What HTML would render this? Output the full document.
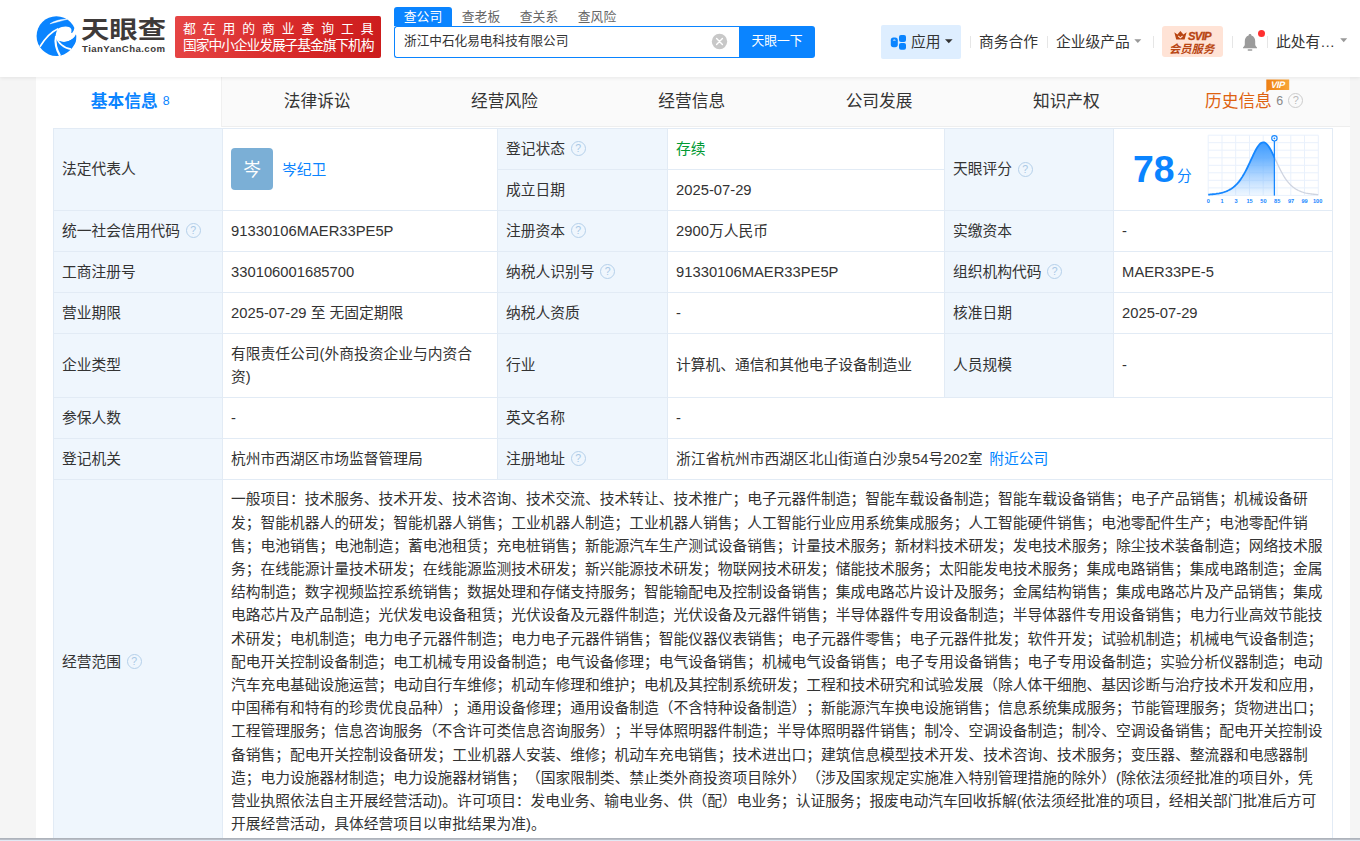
<!DOCTYPE html>
<html lang="zh-CN">
<head>
<meta charset="utf-8">
<title>浙江中石化易电科技有限公司 - 天眼查</title>
<style>
*{box-sizing:border-box;margin:0;padding:0}
html,body{width:1360px;height:841px;overflow:hidden}
body{background:#f5f5f5;font-family:"Liberation Sans","Noto Sans CJK SC",sans-serif;color:#333;font-size:15px;position:relative}
a{text-decoration:none;color:#0084ff}
.abs{position:absolute}
/* header */
#hd{position:absolute;left:0;top:0;width:1360px;height:77px;background:#fff;box-shadow:0 1px 4px rgba(0,0,0,.08);z-index:5}
#hd .t{position:absolute;white-space:nowrap;line-height:1}

#lg1{left:81px;top:16px;font-size:24px;font-weight:bold;color:#3e3a39;letter-spacing:0;font-family:"Noto Sans CJK SC",sans-serif;transform:scaleX(1.18);transform-origin:0 0}
#lg2{left:82px;top:44px;font-size:9.6px;font-weight:bold;color:#3e3a39;letter-spacing:0.45px}
#ban{position:absolute;left:175px;top:16px;width:206px;height:42px;border-radius:2px;background:linear-gradient(100deg,#e64545 0%,#d82a2a 55%,#cc1c1c 100%);color:#fff;white-space:nowrap}
#ban .b1{position:absolute;left:8px;top:6px;font-size:12.8px;line-height:14px;letter-spacing:6.94px}
#ban .b2{position:absolute;left:8px;top:23px;font-size:13.8px;line-height:14px;letter-spacing:-1.1px}
.stab{top:7px;width:58px;height:19px;line-height:19px!important;text-align:center;font-size:12.8px;color:#666}
.stab.on{background:#0a84ff;color:#fff;border-radius:3px 3px 0 0}
#sbox{position:absolute;left:394px;top:26px;width:347px;height:32px;border:1px solid #0a84ff;border-right:0;border-radius:3px 0 0 3px;background:#fff;font-size:12.65px;line-height:28.5px;padding-left:9px;color:#333;white-space:nowrap}
#sbtn{position:absolute;left:739px;top:26px;width:76px;height:32px;background:#0a84ff;color:#fff;font-size:12.8px;line-height:30px;text-align:center;border-radius:0 3px 3px 0;white-space:nowrap}
#app{position:absolute;left:881px;top:25px;width:80px;height:34px;background:#deeeff;border-radius:2px}
.sep{position:absolute;top:36px;width:1px;height:12px;background:#e6e6e6}
.nav{top:34px;font-size:14.75px;color:#333;line-height:17px!important}
#svip{position:absolute;left:1162px;top:26px;width:61px;height:31px;background:#ffe3d6;border-radius:3px;color:#b84512}
/* card */
#card{position:absolute;left:36px;top:77px;width:1314px;height:770px;background:#fff}
#tabs{position:absolute;left:0;top:0;width:1314px;height:50px;background:#fafafa;border-bottom:1px solid #eee}
#tabs .tab{position:absolute;top:0;height:50px;width:187.3px;text-align:center;font-size:16.72px;line-height:50px;color:#333;white-space:nowrap}
#tabs .tab.on{background:#fff;color:#0a84ff;font-weight:bold;height:50px;width:186px;border-right:1px solid #f0f0f0;padding-left:3.4px}
#tabs .tab .n{font-size:12.4px;font-weight:normal;position:relative;top:-2px;margin-left:5px;font-family:"Liberation Sans",sans-serif}
/* table */
#tb{position:absolute;left:53px;top:128px;width:1279px;border-collapse:collapse;table-layout:fixed;font-size:14.75px;color:#333}
#tb td{border:1px solid #e2ebf5;padding:0 8.1px;vertical-align:middle;line-height:23px;background:#fff;height:41px}
#tb td.l{background:#eff6fd}
.q{display:inline-block;width:15px;height:15px;border:1px solid #b5d0ea;border-radius:50%;font-size:10.5px;line-height:13.5px;text-align:center;color:#a9c8e6;vertical-align:middle;margin-left:5.5px;position:relative;top:-1px;font-family:"Liberation Sans",sans-serif}
.av{display:inline-block;width:42px;height:42px;border-radius:4px;background:#7bafd6;color:#fff;font-size:17.7px;line-height:45px;text-align:center;vertical-align:middle;margin-right:9px;position:relative;top:-1px}
.nm{vertical-align:middle;color:#0a84ff}
.sc{position:absolute;left:19px;top:20.5px;font:bold 37.4px/38px "Liberation Sans",sans-serif;color:#0a84ff;letter-spacing:0}
.fen{position:absolute;left:63px;top:36.5px;font-size:14.75px;line-height:20px;color:#0a84ff}
.q2{display:inline-block;width:15px;height:15px;border:1px solid #ccc;border-radius:50%;font-size:11px;line-height:13.5px;text-align:center;color:#bbb;vertical-align:middle;margin-left:5px;position:relative;top:-2px;font-weight:normal;font-family:"Liberation Sans",sans-serif}
#scope div{white-space:nowrap;text-spacing-trim:space-all;height:23.2px;line-height:23.2px}
#btm{position:absolute;left:0;top:838px;width:1360px;height:3px;background:linear-gradient(#aeb3bb 0,#aeb3bb 33.3%,#b9bec7 33.3%,#b9bec7 66.6%,#e1e9f4 66.6%);z-index:9}
</style>
</head>
<body>
<div id="hd">
 <svg class="abs" style="left:32px;top:12px" width="50" height="48" viewBox="0 0 876 841">
  <circle cx="427" cy="422" r="347" fill="#0a84ff"/>
  <path d="M455,292 C530,250 650,235 688,300 C695,330 690,350 688,366 L702,366 C725,340 738,315 738,285 L800,285 L800,395 L770,395 C740,480 600,560 480,508 C445,480 425,455 416,428 C414,385 425,335 455,292 Z" fill="#fff"/>
  <path d="M480,508 C600,560 740,480 770,395 C785,470 770,560 720,590 C650,625 540,590 480,508 Z" fill="#0a84ff"/>
  <path d="M428,430 C450,540 560,640 685,650" fill="none" stroke="#fff" stroke-width="28"/>
  <path d="M422,420 C395,540 440,680 492,768" fill="none" stroke="#fff" stroke-width="38"/>
  <path d="M458,293 C350,340 230,460 138,608" fill="none" stroke="#fff" stroke-width="30"/>
  <path d="M314,208 C390,150 520,125 622,126 C520,150 420,185 314,208 Z" fill="#fff" stroke="#fff" stroke-width="8"/>
 </svg>
 <div class="t" id="lg1">天眼查</div>
 <div class="t" id="lg2">TianYanCha.com</div>
 <div id="ban"><div class="b1">都在用的商业查询工具</div><div class="b2">国家中小企业发展子基金旗下机构</div></div>
 <div class="t stab on" style="left:394px">查公司</div>
 <div class="t stab" style="left:452px">查老板</div>
 <div class="t stab" style="left:510px">查关系</div>
 <div class="t stab" style="left:568px">查风险</div>
 <div id="sbox"><span>浙江中石化易电科技有限公司</span></div>
 <svg class="abs" style="left:711px;top:33px" width="17" height="17" viewBox="0 0 17 17"><circle cx="8.5" cy="8.5" r="7.7" fill="#c8c8c8"/><path d="M5.6,5.6 L11.4,11.4 M11.4,5.6 L5.6,11.4" stroke="#fff" stroke-width="1.4" stroke-linecap="round"/></svg>
 <div id="sbtn">天眼一下</div>
 <div id="app">
  <svg class="abs" style="left:9px;top:9px" width="17" height="17" viewBox="0 0 17 17"><rect x="0.8" y="3.6" width="7" height="9.6" rx="2.6" fill="#0a84ff"/><path d="M2.7,6.6 Q4.3,4.2 5.9,6.6 Z" fill="#fff"/><rect x="9" y="1.1" width="7" height="6.8" rx="2" fill="#0a84ff"/><rect x="9" y="9" width="7" height="6.8" rx="2" fill="#0a84ff"/></svg>
  <span class="t" style="left:30px;top:9.6px;font-size:14.75px">应用</span>
  <svg class="abs" style="left:64px;top:14px" width="8" height="5" viewBox="0 0 8 5"><path d="M0,0.3 L7.6,0.3 L3.8,4.2 Z" fill="#333"/></svg>
 </div>
 <i class="sep" style="left:970px"></i>
 <div class="t nav" style="left:979px">商务合作</div>
 <i class="sep" style="left:1047px"></i>
 <div class="t nav" style="left:1056px">企业级产品</div>
 <svg class="abs" style="left:1134px;top:39px" width="8" height="5" viewBox="0 0 8 5"><path d="M0.3,0.3 L7.3,0.3 L3.8,4 Z" fill="#999"/></svg>
 <i class="sep" style="left:1153px"></i>
 <div id="svip">
  <svg class="abs" style="left:12px;top:5px" width="13" height="9" viewBox="0 0 13 9"><path d="M0.3,1.2 L3.4,3.4 L6.4,0 L9.4,3.4 L12.6,1.2 L10.6,8.6 L2.2,8.6 Z" fill="#b84512"/><path d="M4.3,5 L6.4,6.8 L8.5,5" fill="none" stroke="#ffe3d6" stroke-width="1.1"/></svg>
  <div class="t" style="left:26px;top:4px;font:italic bold 11.3px 'Liberation Sans',sans-serif;letter-spacing:-0.7px;-webkit-text-stroke:0.3px #b84512">SVIP</div>
  <div class="t" style="left:7px;top:18.4px;font-size:11.3px;font-weight:bold;font-style:italic;letter-spacing:0">会员服务</div>
 </div>
 <i class="sep" style="left:1232px"></i>
 <svg class="abs" style="left:1241px;top:33px" width="18" height="19" viewBox="0 0 18 19"><path d="M9,1 C9.9,1 10.4,1.6 10.4,2.4 C13,3.2 14.2,5.4 14.2,8.2 L14.2,11.6 C14.2,12.8 15,13.6 16,14.4 L16,15.2 L2,15.2 L2,14.4 C3,13.6 3.8,12.8 3.8,11.6 L3.8,8.2 C3.8,5.4 5,3.2 7.6,2.4 C7.6,1.6 8.1,1 9,1 Z" fill="#9b9b9b"/><rect x="6.6" y="16.3" width="4.8" height="1.5" rx="0.7" fill="#9b9b9b"/></svg>
 <i class="abs" style="left:1258px;top:29.5px;width:7px;height:7px;border-radius:50%;background:#ff3030"></i>
 <i class="sep" style="left:1267px"></i>
 <div class="t nav" style="left:1276px">此处有…</div>
 <svg class="abs" style="left:1340px;top:38px" width="8" height="5" viewBox="0 0 8 5"><path d="M0.2,0.3 L7.2,0.3 L3.7,4.3 Z" fill="#999"/></svg>
</div>
<div id="card">
 <div id="tabs">
  <div class="tab on" style="left:0">基本信息<span class="n">8</span></div>
  <div class="tab" style="left:187.5px">法律诉讼</div>
  <div class="tab" style="left:374.8px">经营风险</div>
  <div class="tab" style="left:562.1px">经营信息</div>
  <div class="tab" style="left:749.4px">公司发展</div>
  <div class="tab" style="left:936.7px">知识产权</div>
  <div class="tab" style="left:1126px;color:#de6210;text-align:left;padding-left:43px">历史信息<span class="n" style="color:#888;margin-left:4.5px">6</span><span class="q2">?</span>
   <svg class="abs" style="left:103.5px;top:1.5px" width="24" height="14" viewBox="0 0 24 14"><defs><linearGradient id="vg" x1="0" y1="0" x2="1" y2="0"><stop offset="0" stop-color="#ee7f14"/><stop offset="1" stop-color="#f8a638"/></linearGradient></defs><path d="M0.3,0.5 H23.2 V11 H3.2 L0.3,13.6 Z" fill="url(#vg)"/><text x="6.6" y="9" font-family="Liberation Sans,sans-serif" font-size="9.3" font-weight="bold" fill="#fff" letter-spacing="-0.5" transform="skewX(-14)">VIP</text></svg></div>
 </div>
</div>
<table id="tb">
<colgroup><col style="width:169px"><col style="width:275px"><col style="width:170px"><col style="width:277px"><col style="width:169px"><col style="width:219px"></colgroup>
<tr><td class="l" rowspan="2">法定代表人</td><td rowspan="2"><span class="av">岑</span><a class="nm">岑纪卫</a></td><td class="l">登记状态<span class="q">?</span></td><td style="color:#093">存续</td><td class="l" rowspan="2">天眼评分<span class="q">?</span></td><td rowspan="2" style="position:relative;padding:0"><span class="sc">78</span><span class="fen">分</span>
<svg class="abs" style="left:87px;top:0" width="130" height="81" viewBox="1201 129 130 81">
<defs><linearGradient id="g1" x1="0" y1="0" x2="0" y2="1"><stop offset="0" stop-color="#3d9bff"/><stop offset="0.3" stop-color="#5aaaff" stop-opacity=".9"/><stop offset="1" stop-color="#7dbcff" stop-opacity=".12"/></linearGradient><clipPath id="cl"><rect x="1200" y="130" width="74.4" height="70"/></clipPath><clipPath id="cr"><rect x="1274.4" y="130" width="60" height="70"/></clipPath></defs>
<g stroke="#e9f1fc" stroke-width="1" fill="none"><path d="M1208.2,135.2 V195.4"/><path d="M1208.2,135.2 H1318.3"/><path d="M1222.0,135.2 V195.4"/><path d="M1208.2,142.7 H1318.3"/><path d="M1235.7,135.2 V195.4"/><path d="M1208.2,150.2 H1318.3"/><path d="M1249.5,135.2 V195.4"/><path d="M1208.2,157.8 H1318.3"/><path d="M1263.2,135.2 V195.4"/><path d="M1208.2,165.3 H1318.3"/><path d="M1277.0,135.2 V195.4"/><path d="M1208.2,172.8 H1318.3"/><path d="M1290.8,135.2 V195.4"/><path d="M1208.2,180.3 H1318.3"/><path d="M1304.5,135.2 V195.4"/><path d="M1208.2,187.9 H1318.3"/><path d="M1318.3,135.2 V195.4"/><path d="M1208.2,195.4 H1318.3"/></g>
<path d="M1208.2,194.62 L1209.3,194.55 L1210.4,194.47 L1211.5,194.38 L1212.6,194.27 L1213.7,194.16 L1214.8,194.03 L1215.9,193.89 L1217.0,193.72 L1218.1,193.54 L1219.2,193.34 L1220.3,193.11 L1221.4,192.86 L1222.5,192.57 L1223.6,192.25 L1224.7,191.90 L1225.8,191.50 L1226.9,191.06 L1228.0,190.56 L1229.1,190.01 L1230.2,189.40 L1231.3,188.72 L1232.4,187.97 L1233.5,187.14 L1234.6,186.23 L1235.7,185.22 L1236.8,184.11 L1237.9,182.89 L1239.0,181.57 L1240.1,180.13 L1241.2,178.57 L1242.3,176.89 L1243.4,175.09 L1244.5,173.16 L1245.6,171.13 L1246.7,168.99 L1247.8,166.75 L1248.9,164.44 L1250.0,162.08 L1251.1,159.69 L1252.2,157.30 L1253.3,154.95 L1254.4,152.68 L1255.5,150.53 L1256.6,148.55 L1257.7,146.77 L1258.8,145.25 L1259.9,144.01 L1261.0,143.09 L1262.1,142.52 L1263.2,142.30 L1264.3,142.45 L1265.4,142.96 L1266.5,143.82 L1267.6,145.00 L1268.7,146.48 L1269.8,148.21 L1270.9,150.16 L1272.0,152.28 L1273.1,154.53 L1274.2,156.87 L1275.3,159.25 L1276.4,161.64 L1277.5,164.02 L1278.6,166.34 L1279.7,168.59 L1280.8,170.75 L1281.9,172.80 L1283.0,174.75 L1284.1,176.57 L1285.2,178.27 L1286.3,179.85 L1287.4,181.32 L1288.5,182.66 L1289.6,183.89 L1290.7,185.02 L1291.8,186.05 L1292.9,186.98 L1294.0,187.83 L1295.1,188.59 L1296.2,189.28 L1297.3,189.91 L1298.4,190.47 L1299.5,190.97 L1300.6,191.42 L1301.7,191.83 L1302.8,192.19 L1303.9,192.52 L1305.0,192.81 L1306.1,193.07 L1307.2,193.30 L1308.3,193.51 L1309.4,193.69 L1310.5,193.86 L1311.6,194.01 L1312.7,194.14 L1313.8,194.25 L1314.9,194.36 L1316.0,194.45 L1317.1,194.53 L1318.2,194.61 L1318.3,195.6 L1208.2,195.6 Z" fill="url(#g1)" clip-path="url(#cl)"/>
<path d="M1208.2,194.62 L1209.3,194.55 L1210.4,194.47 L1211.5,194.38 L1212.6,194.27 L1213.7,194.16 L1214.8,194.03 L1215.9,193.89 L1217.0,193.72 L1218.1,193.54 L1219.2,193.34 L1220.3,193.11 L1221.4,192.86 L1222.5,192.57 L1223.6,192.25 L1224.7,191.90 L1225.8,191.50 L1226.9,191.06 L1228.0,190.56 L1229.1,190.01 L1230.2,189.40 L1231.3,188.72 L1232.4,187.97 L1233.5,187.14 L1234.6,186.23 L1235.7,185.22 L1236.8,184.11 L1237.9,182.89 L1239.0,181.57 L1240.1,180.13 L1241.2,178.57 L1242.3,176.89 L1243.4,175.09 L1244.5,173.16 L1245.6,171.13 L1246.7,168.99 L1247.8,166.75 L1248.9,164.44 L1250.0,162.08 L1251.1,159.69 L1252.2,157.30 L1253.3,154.95 L1254.4,152.68 L1255.5,150.53 L1256.6,148.55 L1257.7,146.77 L1258.8,145.25 L1259.9,144.01 L1261.0,143.09 L1262.1,142.52 L1263.2,142.30 L1264.3,142.45 L1265.4,142.96 L1266.5,143.82 L1267.6,145.00 L1268.7,146.48 L1269.8,148.21 L1270.9,150.16 L1272.0,152.28 L1273.1,154.53 L1274.2,156.87 L1275.3,159.25 L1276.4,161.64 L1277.5,164.02 L1278.6,166.34 L1279.7,168.59 L1280.8,170.75 L1281.9,172.80 L1283.0,174.75 L1284.1,176.57 L1285.2,178.27 L1286.3,179.85 L1287.4,181.32 L1288.5,182.66 L1289.6,183.89 L1290.7,185.02 L1291.8,186.05 L1292.9,186.98 L1294.0,187.83 L1295.1,188.59 L1296.2,189.28 L1297.3,189.91 L1298.4,190.47 L1299.5,190.97 L1300.6,191.42 L1301.7,191.83 L1302.8,192.19 L1303.9,192.52 L1305.0,192.81 L1306.1,193.07 L1307.2,193.30 L1308.3,193.51 L1309.4,193.69 L1310.5,193.86 L1311.6,194.01 L1312.7,194.14 L1313.8,194.25 L1314.9,194.36 L1316.0,194.45 L1317.1,194.53 L1318.2,194.61" fill="none" stroke="#cfd4e0" stroke-width="1.3" clip-path="url(#cr)"/>
<path d="M1208.2,194.62 L1209.3,194.55 L1210.4,194.47 L1211.5,194.38 L1212.6,194.27 L1213.7,194.16 L1214.8,194.03 L1215.9,193.89 L1217.0,193.72 L1218.1,193.54 L1219.2,193.34 L1220.3,193.11 L1221.4,192.86 L1222.5,192.57 L1223.6,192.25 L1224.7,191.90 L1225.8,191.50 L1226.9,191.06 L1228.0,190.56 L1229.1,190.01 L1230.2,189.40 L1231.3,188.72 L1232.4,187.97 L1233.5,187.14 L1234.6,186.23 L1235.7,185.22 L1236.8,184.11 L1237.9,182.89 L1239.0,181.57 L1240.1,180.13 L1241.2,178.57 L1242.3,176.89 L1243.4,175.09 L1244.5,173.16 L1245.6,171.13 L1246.7,168.99 L1247.8,166.75 L1248.9,164.44 L1250.0,162.08 L1251.1,159.69 L1252.2,157.30 L1253.3,154.95 L1254.4,152.68 L1255.5,150.53 L1256.6,148.55 L1257.7,146.77 L1258.8,145.25 L1259.9,144.01 L1261.0,143.09 L1262.1,142.52 L1263.2,142.30 L1264.3,142.45 L1265.4,142.96 L1266.5,143.82 L1267.6,145.00 L1268.7,146.48 L1269.8,148.21 L1270.9,150.16 L1272.0,152.28 L1273.1,154.53 L1274.2,156.87 L1275.3,159.25 L1276.4,161.64 L1277.5,164.02 L1278.6,166.34 L1279.7,168.59 L1280.8,170.75 L1281.9,172.80 L1283.0,174.75 L1284.1,176.57 L1285.2,178.27 L1286.3,179.85 L1287.4,181.32 L1288.5,182.66 L1289.6,183.89 L1290.7,185.02 L1291.8,186.05 L1292.9,186.98 L1294.0,187.83 L1295.1,188.59 L1296.2,189.28 L1297.3,189.91 L1298.4,190.47 L1299.5,190.97 L1300.6,191.42 L1301.7,191.83 L1302.8,192.19 L1303.9,192.52 L1305.0,192.81 L1306.1,193.07 L1307.2,193.30 L1308.3,193.51 L1309.4,193.69 L1310.5,193.86 L1311.6,194.01 L1312.7,194.14 L1313.8,194.25 L1314.9,194.36 L1316.0,194.45 L1317.1,194.53 L1318.2,194.61" fill="none" stroke="#1687ff" stroke-width="1.8" clip-path="url(#cl)"/>
<line x1="1274.4" y1="141" x2="1274.4" y2="195.6" stroke="#1687ff" stroke-width="1.3"/>
<circle cx="1274.4" cy="138.3" r="2.7" fill="#fff" stroke="#1687ff" stroke-width="1.1"/><circle cx="1274.4" cy="138.3" r="0.9" fill="#1687ff"/>
<g font-family="Liberation Sans,sans-serif" font-size="5.6" font-weight="bold" fill="#1687ff" text-anchor="middle"><text x="1208.4" y="202.7">0</text><text x="1222.0" y="202.7">1</text><text x="1236.0" y="202.7">3</text><text x="1249.6" y="202.7">15</text><text x="1263.4" y="202.7">50</text><text x="1277.2" y="202.7">85</text><text x="1291.0" y="202.7">97</text><text x="1304.6" y="202.7">99</text><text x="1317.6" y="202.7">100</text></g>
</svg></td></tr>
<tr><td class="l">成立日期</td><td>2025-07-29</td></tr>
<tr><td class="l">统一社会信用代码<span class="q">?</span></td><td>91330106MAER33PE5P</td><td class="l">注册资本<span class="q">?</span></td><td>2900万人民币</td><td class="l">实缴资本</td><td>-</td></tr>
<tr><td class="l">工商注册号</td><td>330106001685700</td><td class="l">纳税人识别号<span class="q">?</span></td><td>91330106MAER33PE5P</td><td class="l">组织机构代码<span class="q">?</span></td><td>MAER33PE-5</td></tr>
<tr><td class="l">营业期限</td><td>2025-07-29 至 无固定期限</td><td class="l">纳税人资质</td><td>-</td><td class="l">核准日期</td><td>2025-07-29</td></tr>
<tr><td class="l" style="height:64px">企业类型</td><td>有限责任公司(外商投资企业与内资合<br>资)</td><td class="l">行业</td><td>计算机、通信和其他电子设备制造业</td><td class="l">人员规模</td><td>-</td></tr>
<tr><td class="l">参保人数</td><td>-</td><td class="l">英文名称</td><td colspan="3">-</td></tr>
<tr><td class="l">登记机关</td><td>杭州市西湖区市场监督管理局</td><td class="l">注册地址<span class="q">?</span></td><td colspan="3">浙江省杭州市西湖区北山街道白沙泉54号202室<a style="margin-left:6.6px">附近公司</a></td></tr>
<tr><td class="l" style="height:365px">经营范围<span class="q">?</span></td><td colspan="5" id="scope" style="padding-top:8.3px;padding-bottom:7.5px">
<div>一般项目：技术服务、技术开发、技术咨询、技术交流、技术转让、技术推广；电子元器件制造；智能车载设备制造；智能车载设备销售；电子产品销售；机械设备研</div>
<div>发；智能机器人的研发；智能机器人销售；工业机器人制造；工业机器人销售；人工智能行业应用系统集成服务；人工智能硬件销售；电池零配件生产；电池零配件销</div>
<div>售；电池销售；电池制造；蓄电池租赁；充电桩销售；新能源汽车生产测试设备销售；计量技术服务；新材料技术研发；发电技术服务；除尘技术装备制造；网络技术服</div>
<div>务；在线能源计量技术研发；在线能源监测技术研发；新兴能源技术研发；物联网技术研发；储能技术服务；太阳能发电技术服务；集成电路销售；集成电路制造；金属</div>
<div>结构制造；数字视频监控系统销售；数据处理和存储支持服务；智能输配电及控制设备销售；集成电路芯片设计及服务；金属结构销售；集成电路芯片及产品销售；集成</div>
<div>电路芯片及产品制造；光伏发电设备租赁；光伏设备及元器件制造；光伏设备及元器件销售；半导体器件专用设备制造；半导体器件专用设备销售；电力行业高效节能技</div>
<div>术研发；电机制造；电力电子元器件制造；电力电子元器件销售；智能仪器仪表销售；电子元器件零售；电子元器件批发；软件开发；试验机制造；机械电气设备制造；</div>
<div>配电开关控制设备制造；电工机械专用设备制造；电气设备修理；电气设备销售；机械电气设备销售；电子专用设备销售；电子专用设备制造；实验分析仪器制造；电动</div>
<div>汽车充电基础设施运营；电动自行车维修；机动车修理和维护；电机及其控制系统研发；工程和技术研究和试验发展（除人体干细胞、基因诊断与治疗技术开发和应用，</div>
<div>中国稀有和特有的珍贵优良品种）；通用设备修理；通用设备制造（不含特种设备制造）；新能源汽车换电设施销售；信息系统集成服务；节能管理服务；货物进出口；</div>
<div>工程管理服务；信息咨询服务（不含许可类信息咨询服务）；半导体照明器件制造；半导体照明器件销售；制冷、空调设备制造；制冷、空调设备销售；配电开关控制设</div>
<div>备销售；配电开关控制设备研发；工业机器人安装、维修；机动车充电销售；技术进出口；建筑信息模型技术开发、技术咨询、技术服务；变压器、整流器和电感器制</div>
<div>造；电力设施器材制造；电力设施器材销售；（国家限制类、禁止类外商投资项目除外）（涉及国家规定实施准入特别管理措施的除外）(除依法须经批准的项目外，凭</div>
<div style="letter-spacing:-0.02px">营业执照依法自主开展经营活动)。许可项目：发电业务、输电业务、供（配）电业务；认证服务；报废电动汽车回收拆解(依法须经批准的项目，经相关部门批准后方可</div>
<div>开展经营活动，具体经营项目以审批结果为准)。</div>
</td></tr>
</table>
<div id="btm"></div>
</body>
</html>
